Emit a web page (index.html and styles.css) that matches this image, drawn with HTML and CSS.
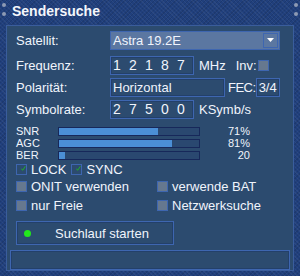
FILE: index.html
```html
<!DOCTYPE html>
<html lang="de">
<head>
  <meta charset="UTF-8">
  <title>Sendersuche</title>
  <link rel="stylesheet" href="styles.css">
</head>
<body>

<div class="window">
  <div class="titlebar">
    <span class="knob knob-l1"></span><span class="knob knob-l2"></span>
    <span class="knob knob-r1"></span><span class="knob knob-r2"></span>
    Sendersuche
  </div>

  <div class="panel">
    <!-- Tuner-Einstellungen -->
    <div class="row row-sat">
      <span class="label">Satellit:</span>
      <div class="select">
        <span>Astra 19.2E</span>
        <span class="select-btn"><svg width="9" height="5" viewBox="0 0 9 5"><path d="M1 0h7L4.5 4z" fill="#fff"/></svg></span>
      </div>
    </div>
    <div class="row">
      <span class="label">Frequenz:</span>
      <div class="field digits"><span>1</span><span>2</span><span>1</span><span>8</span><span>7</span></div>
      <span class="unit">MHz</span>
      <span class="unit inv">Inv:</span>
      <span class="check"></span>
    </div>
    <div class="row">
      <span class="label">Polarität:</span>
      <div class="field wide">Horizontal</div>
      <span class="unit fec">FEC:</span>
      <div class="field small">3/4</div>
    </div>
    <div class="row">
      <span class="label">Symbolrate:</span>
      <div class="field digits"><span>2</span><span>7</span><span>5</span><span>0</span><span>0</span></div>
      <span class="unit">KSymb/s</span>
    </div>

    <!-- Signalwerte -->
    <div class="signal">
      <div class="sig-row"><span class="sig-name">SNR</span><div class="bar"><div class="fill" style="width: 71%"></div></div><span class="sig-val">71%</span></div>
      <div class="sig-row"><span class="sig-name">AGC</span><div class="bar"><div class="fill" style="width: 81%"></div></div><span class="sig-val">81%</span></div>
      <div class="sig-row"><span class="sig-name">BER</span><div class="bar"><div class="fill" style="width: 4%"></div></div><span class="sig-val">20</span></div>
    </div>

    <div class="status-checks">
      <span class="check checked"><svg width="15" height="15" viewBox="0 0 15 15"><path d="M1.5 8l3.5 5L13 1" stroke="#1ec81a" stroke-width="2.4" fill="none"/></svg></span><span class="opt-text">LOCK</span>
      <span class="check checked"><svg width="15" height="15" viewBox="0 0 15 15"><path d="M1.5 8l3.5 5L13 1" stroke="#1ec81a" stroke-width="2.4" fill="none"/></svg></span><span class="opt-text">SYNC</span>
    </div>

    <!-- Optionen -->
    <div class="options">
      <div class="opt"><span class="check"></span><span class="opt-text">ONIT verwenden</span></div>
      <div class="opt"><span class="check"></span><span class="opt-text">verwende BAT</span></div>
      <div class="opt"><span class="check"></span><span class="opt-text">nur Freie</span></div>
      <div class="opt"><span class="check"></span><span class="opt-text">Netzwerksuche</span></div>
    </div>

    <button class="start-button"><span class="led"></span>Suchlauf starten</button>

    <div class="statusbar"></div>
  </div>
</div>

</body>
</html>
```

FILE: styles.css
```css
/* Grundlayout */
body {
  margin: 0;
  font-family: "Liberation Sans", Arial, sans-serif;
  color: #f0f4fc;
  background-color: #1f3d78;
}
.window {
  width: 300px;
  height: 276px;
  background-color: #203f7c;
  background-image: repeating-linear-gradient(45deg, rgba(255,255,255,0.05) 0 1px, transparent 1px 3px),
                    repeating-linear-gradient(-45deg, rgba(0,0,0,0.1) 0 1px, transparent 1px 3px);
  overflow: hidden;
}

/* Titelleiste */
.titlebar {
  position: relative;
  height: 25px;
  line-height: 22px;
  padding-left: 12px;
  font-size: 14px;
  font-weight: bold;
  color: #f4f6fb;
}
.knob {
  position: absolute;
  width: 4px;
  height: 4px;
  border-radius: 50%;
  background: #8d9ab4;
}
.knob-l1 { left: 2px; top: 3px; }
.knob-l2 { left: 2px; top: 12px; }
.knob-r1 { right: 2px; top: 3px; }
.knob-r2 { right: 2px; top: 12px; }

/* Inhaltsbereich */
.panel {
  margin: 0 6px;
  height: 246px;
  padding: 5px 9px 0 9px;
  background-color: #2c4b6f;
  border: 1px solid #3a5d9c;
  box-sizing: border-box;
  font-size: 13px;
}

.row {
  display: flex;
  align-items: center;
  height: 19px;
  margin-bottom: 3px;
}
.row-sat {
  margin-bottom: 6px;
}
.label {
  width: 94px;
  flex-shrink: 0;
}
.select {
  display: flex;
  align-items: center;
  justify-content: space-between;
  width: 170px;
  height: 19px;
  padding-left: 2px;
  box-sizing: border-box;
  background-color: #5b77a1;
  border: 1px solid #3e66b0;
}
.select-btn {
  display: flex;
  align-items: center;
  justify-content: center;
  width: 15px;
  height: 15px;
  margin-right: 1px;
  border: 1px solid #3e66b0;
  box-sizing: border-box;
}
.field {
  height: 19px;
  line-height: 17px;
  padding-left: 2px;
  box-sizing: border-box;
  border: 1px solid #3e66b0;
  box-shadow: inset 0 0 0 1px #23406a;
  white-space: nowrap;
}
.digits {
  display: flex;
  width: 84px;
  font-size: 14px;
}
.digits span {
  width: 16.4px;
}
.wide {
  width: 115px;
}
.small {
  width: 24px;
}
.unit {
  margin-left: 5px;
}
.inv {
  margin-left: 10px;
  margin-right: 1px;
}
.fec {
  margin-left: 3px;
  margin-right: 0;
  letter-spacing: -0.5px;
}

/* Signalbalken */
.signal {
  margin-top: 6px;
  font-size: 11px;
  line-height: 12px;
}
.sig-row {
  display: flex;
  align-items: center;
  height: 12px;
}
.sig-name {
  width: 42px;
}
.bar {
  width: 140px;
  height: 7px;
  border: 1px solid #17285a;
  background-color: #2a4870;
}
.fill {
  height: 100%;
  background-color: #4b8fd6;
}
.sig-val {
  width: 50px;
  text-align: right;
}

/* Kontrollkästchen */
.check {
  display: inline-flex;
  align-items: center;
  justify-content: center;
  width: 11px;
  height: 11px;
  flex-shrink: 0;
  background-color: #66788f;
  border: 1px solid #3e66b0;
  box-sizing: border-box;
  overflow: visible;
}
.check.checked {
  background-color: #2c4b6f;
}
.check svg {
  margin-top: -3px;
  margin-left: 4px;
}
.status-checks {
  display: flex;
  align-items: center;
  height: 13px;
  margin-top: 2px;
}
.opt-text {
  margin-left: 4px;
  margin-right: 5px;
}
.options {
  display: grid;
  grid-template-columns: 141px 1fr;
  grid-auto-rows: 13px;
  row-gap: 6px;
  margin-top: 4px;
}
.opt {
  display: flex;
  align-items: center;
}

/* Startknopf */
.start-button {
  display: flex;
  align-items: center;
  width: 158px;
  height: 24px;
  margin-top: 9px;
  padding: 0 0 0 7px;
  font-family: inherit;
  font-size: 13px;
  color: #f0f4fc;
  background-color: #2c4b6f;
  border: 1px solid #3e66b0;
  box-shadow: inset 0 0 0 1px #23406a;
}
.led {
  width: 7px;
  height: 7px;
  margin-right: 24px;
  border-radius: 50%;
  background-color: #22e81c;
}

/* Statuszeile */
.statusbar {
  height: 20px;
  margin: 5px -6px 0 -6px;
  border: 1px solid #3e66b0;
  box-shadow: inset 0 0 0 1px #23406a;
  box-sizing: border-box;
}
```
